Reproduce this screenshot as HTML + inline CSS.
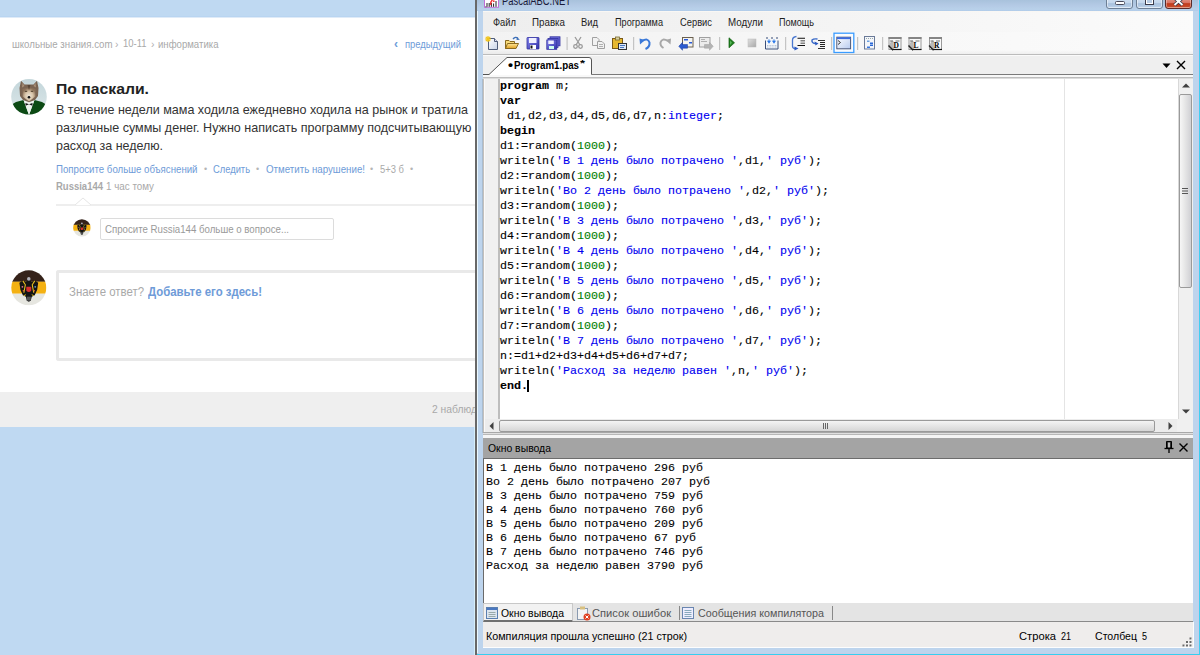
<!DOCTYPE html>
<html><head><meta charset="utf-8">
<style>
*{margin:0;padding:0;box-sizing:border-box}
html,body{width:1200px;height:655px;overflow:hidden;background:#bfd9f2;font-family:"Liberation Sans",sans-serif;position:relative}
.a{position:absolute}
.t{position:absolute;white-space:pre;line-height:1}
svg{position:absolute;overflow:visible}
</style></head><body>
<div class="a" style="left:0px;top:16px;width:475px;height:1px;background:#b9d5f1;"></div>
<div class="a" style="left:0px;top:17px;width:475px;height:1px;background:#dfebf8;"></div>
<div class="a" style="left:0px;top:18px;width:475px;height:374px;background:#fff;"></div>
<div class="a" style="left:0px;top:392px;width:475px;height:35px;background:#efefef;"></div>
<div class="t" style="left:11.5px;top:38.69px;font-size:11px;color:#a9a9a9;font-weight:normal;font-family:'Liberation Sans',sans-serif;transform:scaleX(0.8801);transform-origin:0 0;">школьные знания.com</div>
<div class="t" style="left:115px;top:39.53px;font-size:10px;color:#b0b0b0;font-weight:normal;font-family:'Liberation Sans',sans-serif;transform:scaleX(1.0510);transform-origin:0 0;">›</div>
<div class="t" style="left:123px;top:38.27px;font-size:11.5px;color:#a9a9a9;font-weight:normal;font-family:'Liberation Sans',sans-serif;transform:scaleX(0.8229);transform-origin:0 0;">10-11</div>
<div class="t" style="left:150.5px;top:39.53px;font-size:10px;color:#b0b0b0;font-weight:normal;font-family:'Liberation Sans',sans-serif;transform:scaleX(1.0510);transform-origin:0 0;">›</div>
<div class="t" style="left:158px;top:38.69px;font-size:11px;color:#a9a9a9;font-weight:normal;font-family:'Liberation Sans',sans-serif;transform:scaleX(0.8730);transform-origin:0 0;">информатика</div>
<div class="t" style="left:394px;top:37.84px;font-size:12px;color:#6e9bd8;font-weight:bold;font-family:'Liberation Sans',sans-serif;">‹</div>
<div class="t" style="left:405px;top:38.69px;font-size:11px;color:#6e9bd8;font-weight:normal;font-family:'Liberation Sans',sans-serif;transform:scaleX(0.8545);transform-origin:0 0;">предыдущий</div>
<svg style="left:11.3px;top:79.2px" width="36" height="36" viewBox="0 0 36 36">
<defs><clipPath id="cw"><circle cx="18" cy="17.8" r="17.8"/></clipPath>
<linearGradient id="wbg" x1="0" y1="0" x2="0" y2="1"><stop offset="0" stop-color="#c3d6da"/><stop offset="1" stop-color="#dde8ea"/></linearGradient>
<radialGradient id="wface" cx="0.5" cy="0.6" r="0.55"><stop offset="0" stop-color="#ece4d6"/><stop offset="0.55" stop-color="#d8c4a8"/><stop offset="1" stop-color="#8a7058"/></radialGradient></defs>
<g clip-path="url(#cw)">
<rect width="36" height="36" fill="url(#wbg)"/>
<path d="M0 36 V26 L5 23 L12.5 21 L18 36 L23.5 21 L31 23 L36 26 V36Z" fill="#0c4a14"/>
<path d="M12.5 21 L18 22.5 L23.5 21 L18 36Z" fill="#eef3ee"/>
<path d="M14.5 24 L18 25.3 L21.5 24 V26.8 L18 25.3 L14.5 26.8Z" fill="#151515"/>
<path d="M10 1.8 L13.5 5.5 L22.5 5.5 L26 1.8 L27.5 9 L27 17 L24 21 L18 23.2 L12 21 L9 17 L8.5 9Z" fill="#7a6452"/>
<path d="M11.5 10 L18 8.5 L24.5 10 L24.5 17.5 L18 22.5 L11.5 17.5Z" fill="url(#wface)"/>
<path d="M11.5 3.8 L13.5 7 L11 8.5Z M24.5 3.8 L22.5 7 L25 8.5Z" fill="#a89078"/>
<path d="M16.5 6 L18 11 L19.5 6Z" fill="#5a4838"/>
<circle cx="18" cy="18.2" r="1.3" fill="#111"/>
<path d="M13.8 12.3 H16.2 M19.8 12.3 H22.2" stroke="#3a2a1a" stroke-width="0.9"/>
</g></svg>
<div class="t" style="left:56px;top:81.35px;font-size:15.3px;color:#222;font-weight:bold;font-family:'Liberation Sans',sans-serif;transform:scaleX(1.0290);transform-origin:0 0;">По паскали.</div>
<div class="t" style="left:56px;top:102.50px;font-size:13px;color:#333;font-weight:normal;font-family:'Liberation Sans',sans-serif;transform:scaleX(0.9644);transform-origin:0 0;">В течение недели мама ходила ежедневно ходила на рынок и тратила</div>
<div class="t" style="left:56px;top:120.50px;font-size:13px;color:#333;font-weight:normal;font-family:'Liberation Sans',sans-serif;transform:scaleX(0.9650);transform-origin:0 0;">различные суммы денег. Нужно написать программу подсчитывающую</div>
<div class="t" style="left:56px;top:139.00px;font-size:13px;color:#333;font-weight:normal;font-family:'Liberation Sans',sans-serif;transform:scaleX(0.9578);transform-origin:0 0;">расход за неделю.</div>
<div class="t" style="left:56px;top:163.69px;font-size:11px;color:#6e9bd8;font-weight:normal;font-family:'Liberation Sans',sans-serif;transform:scaleX(0.8777);transform-origin:0 0;">Попросите больше объяснений</div>
<div class="t" style="left:204px;top:165.38px;font-size:9px;color:#b5b5b5;font-weight:normal;font-family:'Liberation Sans',sans-serif;">•</div>
<div class="t" style="left:213px;top:163.69px;font-size:11px;color:#6e9bd8;font-weight:normal;font-family:'Liberation Sans',sans-serif;transform:scaleX(0.8492);transform-origin:0 0;">Следить</div>
<div class="t" style="left:256px;top:165.38px;font-size:9px;color:#b5b5b5;font-weight:normal;font-family:'Liberation Sans',sans-serif;">•</div>
<div class="t" style="left:266px;top:163.69px;font-size:11px;color:#6e9bd8;font-weight:normal;font-family:'Liberation Sans',sans-serif;transform:scaleX(0.8844);transform-origin:0 0;">Отметить нарушение!</div>
<div class="t" style="left:370px;top:165.38px;font-size:9px;color:#b5b5b5;font-weight:normal;font-family:'Liberation Sans',sans-serif;">•</div>
<div class="t" style="left:380px;top:163.69px;font-size:11px;color:#aaa;font-weight:normal;font-family:'Liberation Sans',sans-serif;transform:scaleX(0.8567);transform-origin:0 0;">5+3 б</div>
<div class="t" style="left:410px;top:165.38px;font-size:9px;color:#b5b5b5;font-weight:normal;font-family:'Liberation Sans',sans-serif;">•</div>
<div class="t" style="left:56px;top:181.19px;font-size:11px;color:#a9a9a9;font-weight:bold;font-family:'Liberation Sans',sans-serif;transform:scaleX(0.8636);transform-origin:0 0;">Russia144</div>
<div class="t" style="left:106px;top:181.19px;font-size:11px;color:#a9a9a9;font-weight:normal;font-family:'Liberation Sans',sans-serif;transform:scaleX(0.8922);transform-origin:0 0;">1 час тому</div>
<div class="a" style="left:56px;top:204px;width:419px;height:2px;background:#eeeeee;"></div>
<svg style="left:75px;top:197px" width="16" height="9"><path d="M0 8 L8 1 L16 8" fill="#fff" stroke="#e6e6e6" stroke-width="1"/></svg>
<svg style="left:73.3px;top:219.2px" width="17.8" height="17.8" viewBox="0 0 36 36">
<defs><clipPath id="cf1"><circle cx="18" cy="18" r="17.7"/></clipPath></defs>
<g clip-path="url(#cf1)"><rect width="36" height="12" fill="#35221a"/><rect y="11.8" width="36" height="12.2" fill="#f4b112"/><rect y="24" width="36" height="12" fill="#e6e6e0"/>
<path d="M18 9.5 L21 12 L24 10.5 L27.5 13 L26.5 20 L24 25.5 L21 27 L20 31 L18 32 L16 31 L15 27 L12 25.5 L9.5 20 L8.5 13 L12 10.5 L15 12Z" fill="#141414"/>
<path d="M12 11 L14.5 15 L13 23 M24 11 L21.5 15 L23 23" stroke="#e8c020" stroke-width="1.1" fill="none"/>
<circle cx="18" cy="9" r="1.8" fill="#b0b0b8"/>
<path d="M15.5 17 H20.5 V21 Q18 23.5 15.5 21Z" fill="#d83030"/>
<circle cx="11.5" cy="17" r="0.9" fill="#e07090"/><circle cx="24.5" cy="17" r="0.9" fill="#60a0d0"/>
<circle cx="12.5" cy="21" r="0.8" fill="#e06040"/><circle cx="23.5" cy="21" r="0.8" fill="#e06040"/>
<path d="M13 26 L15 25 M23 26 L21 25" stroke="#e8c020" stroke-width="1"/>
<rect x="16" y="27" width="4" height="4" fill="#555"/>
</g></svg>
<div class="a" style="left:100px;top:218px;width:234px;height:22px;background:#fff;border:1px solid #dcdcdc;border-radius:2px"></div>
<div class="t" style="left:105px;top:223.69px;font-size:11px;color:#9a9a9a;font-weight:normal;font-family:'Liberation Sans',sans-serif;transform:scaleX(0.8795);transform-origin:0 0;">Спросите Russia144 больше о вопросе...</div>
<svg style="left:11.3px;top:269.6px" width="35.6" height="35.6" viewBox="0 0 36 36">
<defs><clipPath id="cf2"><circle cx="18" cy="18" r="17.7"/></clipPath></defs>
<g clip-path="url(#cf2)"><rect width="36" height="12" fill="#35221a"/><rect y="11.8" width="36" height="12.2" fill="#f4b112"/><rect y="24" width="36" height="12" fill="#e6e6e0"/>
<path d="M18 9.5 L21 12 L24 10.5 L27.5 13 L26.5 20 L24 25.5 L21 27 L20 31 L18 32 L16 31 L15 27 L12 25.5 L9.5 20 L8.5 13 L12 10.5 L15 12Z" fill="#141414"/>
<path d="M12 11 L14.5 15 L13 23 M24 11 L21.5 15 L23 23" stroke="#e8c020" stroke-width="1.1" fill="none"/>
<circle cx="18" cy="9" r="1.8" fill="#b0b0b8"/>
<path d="M15.5 17 H20.5 V21 Q18 23.5 15.5 21Z" fill="#d83030"/>
<circle cx="11.5" cy="17" r="0.9" fill="#e07090"/><circle cx="24.5" cy="17" r="0.9" fill="#60a0d0"/>
<circle cx="12.5" cy="21" r="0.8" fill="#e06040"/><circle cx="23.5" cy="21" r="0.8" fill="#e06040"/>
<path d="M13 26 L15 25 M23 26 L21 25" stroke="#e8c020" stroke-width="1"/>
<rect x="16" y="27" width="4" height="4" fill="#555"/>
</g></svg>
<div class="a" style="left:56px;top:270px;width:419px;height:91px;background:#fff;border:3px solid #e9e9e9;border-right:none;border-radius:3px 0 0 3px"></div>
<div class="t" style="left:69px;top:284.50px;font-size:13px;color:#a9a9a9;font-weight:normal;font-family:'Liberation Sans',sans-serif;transform:scaleX(0.8787);transform-origin:0 0;">Знаете ответ?</div>
<div class="t" style="left:148px;top:284.50px;font-size:13px;color:#6e9bd8;font-weight:bold;font-family:'Liberation Sans',sans-serif;transform:scaleX(0.8768);transform-origin:0 0;">Добавьте его здесь!</div>
<div class="t" style="left:432px;top:404.19px;font-size:11px;color:#a9a9a9;font-weight:normal;font-family:'Liberation Sans',sans-serif;transform:scaleX(0.9372);transform-origin:0 0;">2 наблюд</div>
<div class="a" style="left:475px;top:0px;width:2px;height:655px;background:#686868;"></div>
<div class="a" style="left:477px;top:0px;width:723px;height:655px;background:#bdd4ed;"></div>
<div class="a" style="left:1198px;top:0px;width:1px;height:655px;background:#c6cde8;"></div>
<div class="a" style="left:1199px;top:0px;width:1px;height:655px;background:#3fcff2;"></div>
<div class="a" style="left:477px;top:11px;width:1px;height:642px;background:#eaf8ff;"></div>
<div class="a" style="left:482px;top:79px;width:1px;height:354px;background:#a9bccf;"></div>
<div class="a" style="left:474px;top:427px;width:1px;height:228px;background:#d6effb;"></div>
<div class="a" style="left:477px;top:0px;width:721px;height:11px;background:linear-gradient(#a8c2dc,#b3c9e4 45%,#b9d1ea 85%,#afcbe9);"></div>
<div class="a" style="left:477px;top:653px;width:722px;height:1px;background:#c6cde8;"></div>
<div class="a" style="left:477px;top:654px;width:723px;height:1px;background:#35cff0;"></div>
<div class="t" style="left:502px;top:-5.16px;font-size:12px;color:#1a1a3a;font-weight:normal;font-family:'Liberation Sans',sans-serif;transform:scaleX(0.7839);transform-origin:0 0;">PascalABC.NET</div>
<svg style="left:484px;top:0" width="15" height="8"><rect x="0.5" y="-6" width="14" height="13.3" fill="#fff" stroke="#c070d8" stroke-width="1"/><path d="M1.5 6.8 h0.8 M3 3 v3.8 M5.2 3 v3.8 M7.4 3 v3.8 M9.6 3.5 v3.3 M12 1 v5.8" stroke="#222" stroke-width="1"/><path d="M8.5 0 Q6 2 7 5" stroke="#ee2020" stroke-width="1.3" fill="none"/><circle cx="9.8" cy="1.2" r="0.9" fill="#ee3030"/></svg>
<div class="a" style="left:1106px;top:-4px;width:27px;height:13px;background:linear-gradient(#d4e3f3,#c3d6ec 55%,#a9c1dd 60%,#b7cde6 90%,#cadcf0);border:1px solid #6d7f95;border-radius:3px;box-shadow:inset 0 0 0 1px rgba(255,255,255,0.5)"></div>
<div class="a" style="left:1115px;top:1px;width:10px;height:4px;background:#fff;border:1px solid #4a4a5a;border-radius:1.5px"></div>
<div class="a" style="left:1136px;top:-4px;width:27px;height:13px;background:linear-gradient(#d4e3f3,#c3d6ec 55%,#a9c1dd 60%,#b7cde6 90%,#cadcf0);border:1px solid #6d7f95;border-radius:3px;box-shadow:inset 0 0 0 1px rgba(255,255,255,0.5)"></div>
<div class="a" style="left:1144.5px;top:-3px;width:9.5px;height:8px;background:#b8cce4;border:1.5px solid #3a3a4a;box-shadow:inset 0 0 0 1px #fff"></div>
<div class="a" style="left:1165px;top:-4px;width:27px;height:13px;background:linear-gradient(#e8a090,#d87060 55%,#c03a1c 60%,#c84a2a 90%,#e08060);border:1px solid #5a2a2a;border-radius:3px;box-shadow:inset 0 0 0 1px rgba(255,255,255,0.35)"></div>
<svg style="left:1173px;top:-2px" width="11" height="8"><path d="M1.5 0 L9.5 7 M9.5 0 L1.5 7" stroke="#3a3a4a" stroke-width="3.4"/><path d="M1.5 0 L9.5 7 M9.5 0 L1.5 7" stroke="#fff" stroke-width="1.8"/></svg>
<div class="a" style="left:483px;top:11px;width:710px;height:637px;background:#f0f0f0;"></div>
<div class="a" style="left:483px;top:11px;width:710px;height:21px;background:linear-gradient(90deg,#eeeeee,#f4f4f4 50%,#fbfbfb);"></div>
<div class="a" style="left:483px;top:11px;width:710px;height:1px;background:#f9f7f4;"></div>
<div class="t" style="left:493px;top:16.61px;font-size:10.5px;color:#1e1e1e;font-weight:normal;font-family:'Liberation Sans',sans-serif;transform:scaleX(0.8910);transform-origin:0 0;">Файл</div>
<div class="t" style="left:532px;top:16.61px;font-size:10.5px;color:#1e1e1e;font-weight:normal;font-family:'Liberation Sans',sans-serif;transform:scaleX(0.9304);transform-origin:0 0;">Правка</div>
<div class="t" style="left:581px;top:16.61px;font-size:10.5px;color:#1e1e1e;font-weight:normal;font-family:'Liberation Sans',sans-serif;transform:scaleX(0.8950);transform-origin:0 0;">Вид</div>
<div class="t" style="left:615px;top:16.61px;font-size:10.5px;color:#1e1e1e;font-weight:normal;font-family:'Liberation Sans',sans-serif;transform:scaleX(0.8725);transform-origin:0 0;">Программа</div>
<div class="t" style="left:680px;top:16.61px;font-size:10.5px;color:#1e1e1e;font-weight:normal;font-family:'Liberation Sans',sans-serif;transform:scaleX(0.8900);transform-origin:0 0;">Сервис</div>
<div class="t" style="left:728px;top:16.61px;font-size:10.5px;color:#1e1e1e;font-weight:normal;font-family:'Liberation Sans',sans-serif;transform:scaleX(0.9306);transform-origin:0 0;">Модули</div>
<div class="t" style="left:779px;top:16.61px;font-size:10.5px;color:#1e1e1e;font-weight:normal;font-family:'Liberation Sans',sans-serif;transform:scaleX(0.8630);transform-origin:0 0;">Помощь</div>
<div class="a" style="left:483px;top:32px;width:710px;height:22px;background:linear-gradient(90deg,#f3f3f3,#f7f7f7 50%,#fbfbfb);"></div>
<div class="a" style="left:483px;top:50px;width:710px;height:4px;background:linear-gradient(rgba(0,0,0,0),rgba(0,0,0,0.04));"></div>
<div class="a" style="left:483px;top:54px;width:710px;height:1px;background:#bcbcbc;"></div>
<div class="a" style="left:483px;top:55px;width:710px;height:1px;background:#fafafa;"></div>
<div class="a" style="left:483px;top:56px;width:710px;height:19px;background:#efefef;"></div>
<div class="a" style="left:483px;top:74px;width:710px;height:1px;background:#7a7a7a;"></div>
<svg style="left:483px;top:56px" width="110" height="22"><path d="M0 18.5 L6 18.5 L24 1.5 L106 1.5 Q108.5 1.5 108.5 4 L108.5 18.5 L108.5 22 L0 22Z" fill="#fff" stroke="none"/><path d="M0 18.5 L6 18.5 L24 1.5 L106 1.5 Q108.5 1.5 108.5 4 L108.5 18.5" fill="none" stroke="#555" stroke-width="1"/></svg>
<div class="t" style="left:507.5px;top:57.50px;font-size:13px;color:#000;font-weight:bold;font-family:'Liberation Sans',sans-serif;transform:scaleX(1.0986);transform-origin:0 0;">•</div>
<div class="t" style="left:513.5px;top:59.61px;font-size:10.5px;color:#000;font-weight:bold;font-family:'Liberation Sans',sans-serif;transform:scaleX(0.9282);transform-origin:0 0;">Program1.pas</div>
<div class="t" style="left:579.5px;top:59.38px;font-size:9px;color:#000;font-weight:bold;font-family:'Liberation Sans',sans-serif;transform:scaleX(1.4276);transform-origin:0 0;">*</div>
<svg style="left:1162px;top:63px" width="10" height="6"><path d="M0.5 0.5 L8.5 0.5 L4.5 5Z" fill="#000"/></svg>
<svg style="left:1176px;top:60px" width="10" height="10"><path d="M1 1 L9 9 M9 1 L1 9" stroke="#000" stroke-width="1.4"/></svg>
<div class="a" style="left:483px;top:75px;width:710px;height:2px;background:#f8f8f8;"></div>
<div class="a" style="left:483px;top:77px;width:710px;height:1px;background:#bdbdbd;"></div>
<div class="a" style="left:483px;top:78px;width:710px;height:1px;background:#dcdcdc;"></div>
<div class="a" style="left:483px;top:79px;width:696px;height:340px;background:#fff;"></div>
<div class="a" style="left:483px;top:79px;width:15px;height:340px;background:#f0f0f0;"></div>
<div class="a" style="left:498px;top:79px;width:2px;height:340px;background:#bdbdbd;"></div>
<div class="a" style="left:1064px;top:79px;width:1px;height:340px;background:#e4e4e4;"></div>
<div class="a" style="left:1179px;top:79px;width:14px;height:340px;background:#f0f0f0;"></div>
<svg style="left:1182px;top:83px" width="8" height="5"><path d="M0 4.5 L4 0.5 L8 4.5Z" fill="#404040"/></svg>
<div class="a" style="left:1178px;top:79px;width:1px;height:340px;background:#d8d8d8;"></div>
<div class="a" style="left:1179px;top:94px;width:13px;height:194px;background:linear-gradient(90deg,#f6f6f6,#e8e8e8 40%,#d0d0d4);border:1px solid #9a9a9a;border-radius:2px"></div>
<svg style="left:1182px;top:187px" width="7" height="8"><path d="M0 1.5 H6 M0 4 H6 M0 6.5 H6" stroke="#555" stroke-width="1"/></svg>
<svg style="left:1182px;top:409px" width="8" height="5"><path d="M0 0.5 L4 4.5 L8 0.5Z" fill="#404040"/></svg>
<div class="a" style="left:483px;top:419px;width:710px;height:14px;background:#ececec;"></div>
<svg style="left:489px;top:422px" width="5" height="8"><path d="M4.5 0 L0.5 4 L4.5 8Z" fill="#404040"/></svg>
<div class="a" style="left:499px;top:420px;width:656px;height:12px;background:linear-gradient(#f4f4f4,#d6d6d6);border:1px solid #9a9a9a;border-radius:2px"></div>
<svg style="left:823px;top:423px" width="6" height="6"><path d="M0.5 0 V6 M2.5 0 V6 M4.5 0 V6" stroke="#666" stroke-width="1"/></svg>
<svg style="left:1168px;top:422px" width="5" height="8"><path d="M0.5 0 L4.5 4 L0.5 8Z" fill="#404040"/></svg>
<div class="a" style="left:1177px;top:419px;width:16px;height:14px;background:#f0f0f0;"></div>
<div class="a" style="left:483px;top:79px;width:1px;height:354px;background:#c4c0bc;"></div>
<div class="a" style="left:484px;top:79px;width:1px;height:354px;background:#fafafa;"></div>
<div class="a" style="left:483px;top:432px;width:710px;height:1px;background:#a8a8a8;"></div>
<div class="a" style="left:483px;top:433px;width:710px;height:1px;background:#e0e0e0;"></div>
<div class="a" style="left:483px;top:434px;width:710px;height:1px;background:#b8b8b8;"></div>
<div class="a" style="left:483px;top:435px;width:710px;height:3px;background:#f5f5f5;"></div>
<div class="t" style="left:499.5px;top:80.87px;font-size:11px;color:#000;font-weight:bold;font-family:'Liberation Mono',monospace;transform:scaleX(1.0604);transform-origin:0 0;-webkit-text-stroke:0.1px #000">program</div>
<div class="t" style="left:548.5px;top:80.87px;font-size:11px;color:#000;font-weight:normal;font-family:'Liberation Mono',monospace;transform:scaleX(1.0604);transform-origin:0 0;-webkit-text-stroke:0.1px #000"> m;</div>
<div class="t" style="left:499.5px;top:95.87px;font-size:11px;color:#000;font-weight:bold;font-family:'Liberation Mono',monospace;transform:scaleX(1.0604);transform-origin:0 0;-webkit-text-stroke:0.1px #000">var</div>
<div class="t" style="left:499.5px;top:110.87px;font-size:11px;color:#000;font-weight:normal;font-family:'Liberation Mono',monospace;transform:scaleX(1.0604);transform-origin:0 0;-webkit-text-stroke:0.1px #000"> d1,d2,d3,d4,d5,d6,d7,n:</div>
<div class="t" style="left:667.5px;top:110.87px;font-size:11px;color:#0000f0;font-weight:normal;font-family:'Liberation Mono',monospace;transform:scaleX(1.0604);transform-origin:0 0;-webkit-text-stroke:0.1px #0000f0">integer</div>
<div class="t" style="left:716.5px;top:110.87px;font-size:11px;color:#000;font-weight:normal;font-family:'Liberation Mono',monospace;transform:scaleX(1.0604);transform-origin:0 0;-webkit-text-stroke:0.1px #000">;</div>
<div class="t" style="left:499.5px;top:125.87px;font-size:11px;color:#000;font-weight:bold;font-family:'Liberation Mono',monospace;transform:scaleX(1.0604);transform-origin:0 0;-webkit-text-stroke:0.1px #000">begin</div>
<div class="t" style="left:499.5px;top:140.87px;font-size:11px;color:#000;font-weight:normal;font-family:'Liberation Mono',monospace;transform:scaleX(1.0604);transform-origin:0 0;-webkit-text-stroke:0.1px #000">d1:=random(</div>
<div class="t" style="left:576.5px;top:140.87px;font-size:11px;color:#008000;font-weight:normal;font-family:'Liberation Mono',monospace;transform:scaleX(1.0604);transform-origin:0 0;-webkit-text-stroke:0.1px #008000">1000</div>
<div class="t" style="left:604.5px;top:140.87px;font-size:11px;color:#000;font-weight:normal;font-family:'Liberation Mono',monospace;transform:scaleX(1.0604);transform-origin:0 0;-webkit-text-stroke:0.1px #000">);</div>
<div class="t" style="left:499.5px;top:155.87px;font-size:11px;color:#000;font-weight:normal;font-family:'Liberation Mono',monospace;transform:scaleX(1.0604);transform-origin:0 0;-webkit-text-stroke:0.1px #000">writeln(</div>
<div class="t" style="left:555.5px;top:155.87px;font-size:11px;color:#0000f0;font-weight:normal;font-family:'Liberation Mono',monospace;transform:scaleX(1.0604);transform-origin:0 0;-webkit-text-stroke:0.1px #0000f0">&#x27;В 1 день было потрачено &#x27;</div>
<div class="t" style="left:737.5px;top:155.87px;font-size:11px;color:#000;font-weight:normal;font-family:'Liberation Mono',monospace;transform:scaleX(1.0604);transform-origin:0 0;-webkit-text-stroke:0.1px #000">,d1,</div>
<div class="t" style="left:765.5px;top:155.87px;font-size:11px;color:#0000f0;font-weight:normal;font-family:'Liberation Mono',monospace;transform:scaleX(1.0604);transform-origin:0 0;-webkit-text-stroke:0.1px #0000f0">&#x27; руб&#x27;</div>
<div class="t" style="left:807.5px;top:155.87px;font-size:11px;color:#000;font-weight:normal;font-family:'Liberation Mono',monospace;transform:scaleX(1.0604);transform-origin:0 0;-webkit-text-stroke:0.1px #000">);</div>
<div class="t" style="left:499.5px;top:170.87px;font-size:11px;color:#000;font-weight:normal;font-family:'Liberation Mono',monospace;transform:scaleX(1.0604);transform-origin:0 0;-webkit-text-stroke:0.1px #000">d2:=random(</div>
<div class="t" style="left:576.5px;top:170.87px;font-size:11px;color:#008000;font-weight:normal;font-family:'Liberation Mono',monospace;transform:scaleX(1.0604);transform-origin:0 0;-webkit-text-stroke:0.1px #008000">1000</div>
<div class="t" style="left:604.5px;top:170.87px;font-size:11px;color:#000;font-weight:normal;font-family:'Liberation Mono',monospace;transform:scaleX(1.0604);transform-origin:0 0;-webkit-text-stroke:0.1px #000">);</div>
<div class="t" style="left:499.5px;top:185.87px;font-size:11px;color:#000;font-weight:normal;font-family:'Liberation Mono',monospace;transform:scaleX(1.0604);transform-origin:0 0;-webkit-text-stroke:0.1px #000">writeln(</div>
<div class="t" style="left:555.5px;top:185.87px;font-size:11px;color:#0000f0;font-weight:normal;font-family:'Liberation Mono',monospace;transform:scaleX(1.0604);transform-origin:0 0;-webkit-text-stroke:0.1px #0000f0">&#x27;Во 2 день было потрачено &#x27;</div>
<div class="t" style="left:744.5px;top:185.87px;font-size:11px;color:#000;font-weight:normal;font-family:'Liberation Mono',monospace;transform:scaleX(1.0604);transform-origin:0 0;-webkit-text-stroke:0.1px #000">,d2,</div>
<div class="t" style="left:772.5px;top:185.87px;font-size:11px;color:#0000f0;font-weight:normal;font-family:'Liberation Mono',monospace;transform:scaleX(1.0604);transform-origin:0 0;-webkit-text-stroke:0.1px #0000f0">&#x27; руб&#x27;</div>
<div class="t" style="left:814.5px;top:185.87px;font-size:11px;color:#000;font-weight:normal;font-family:'Liberation Mono',monospace;transform:scaleX(1.0604);transform-origin:0 0;-webkit-text-stroke:0.1px #000">);</div>
<div class="t" style="left:499.5px;top:200.87px;font-size:11px;color:#000;font-weight:normal;font-family:'Liberation Mono',monospace;transform:scaleX(1.0604);transform-origin:0 0;-webkit-text-stroke:0.1px #000">d3:=random(</div>
<div class="t" style="left:576.5px;top:200.87px;font-size:11px;color:#008000;font-weight:normal;font-family:'Liberation Mono',monospace;transform:scaleX(1.0604);transform-origin:0 0;-webkit-text-stroke:0.1px #008000">1000</div>
<div class="t" style="left:604.5px;top:200.87px;font-size:11px;color:#000;font-weight:normal;font-family:'Liberation Mono',monospace;transform:scaleX(1.0604);transform-origin:0 0;-webkit-text-stroke:0.1px #000">);</div>
<div class="t" style="left:499.5px;top:215.87px;font-size:11px;color:#000;font-weight:normal;font-family:'Liberation Mono',monospace;transform:scaleX(1.0604);transform-origin:0 0;-webkit-text-stroke:0.1px #000">writeln(</div>
<div class="t" style="left:555.5px;top:215.87px;font-size:11px;color:#0000f0;font-weight:normal;font-family:'Liberation Mono',monospace;transform:scaleX(1.0604);transform-origin:0 0;-webkit-text-stroke:0.1px #0000f0">&#x27;В 3 день было потрачено &#x27;</div>
<div class="t" style="left:737.5px;top:215.87px;font-size:11px;color:#000;font-weight:normal;font-family:'Liberation Mono',monospace;transform:scaleX(1.0604);transform-origin:0 0;-webkit-text-stroke:0.1px #000">,d3,</div>
<div class="t" style="left:765.5px;top:215.87px;font-size:11px;color:#0000f0;font-weight:normal;font-family:'Liberation Mono',monospace;transform:scaleX(1.0604);transform-origin:0 0;-webkit-text-stroke:0.1px #0000f0">&#x27; руб&#x27;</div>
<div class="t" style="left:807.5px;top:215.87px;font-size:11px;color:#000;font-weight:normal;font-family:'Liberation Mono',monospace;transform:scaleX(1.0604);transform-origin:0 0;-webkit-text-stroke:0.1px #000">);</div>
<div class="t" style="left:499.5px;top:230.87px;font-size:11px;color:#000;font-weight:normal;font-family:'Liberation Mono',monospace;transform:scaleX(1.0604);transform-origin:0 0;-webkit-text-stroke:0.1px #000">d4:=random(</div>
<div class="t" style="left:576.5px;top:230.87px;font-size:11px;color:#008000;font-weight:normal;font-family:'Liberation Mono',monospace;transform:scaleX(1.0604);transform-origin:0 0;-webkit-text-stroke:0.1px #008000">1000</div>
<div class="t" style="left:604.5px;top:230.87px;font-size:11px;color:#000;font-weight:normal;font-family:'Liberation Mono',monospace;transform:scaleX(1.0604);transform-origin:0 0;-webkit-text-stroke:0.1px #000">);</div>
<div class="t" style="left:499.5px;top:245.87px;font-size:11px;color:#000;font-weight:normal;font-family:'Liberation Mono',monospace;transform:scaleX(1.0604);transform-origin:0 0;-webkit-text-stroke:0.1px #000">writeln(</div>
<div class="t" style="left:555.5px;top:245.87px;font-size:11px;color:#0000f0;font-weight:normal;font-family:'Liberation Mono',monospace;transform:scaleX(1.0604);transform-origin:0 0;-webkit-text-stroke:0.1px #0000f0">&#x27;В 4 день было потрачено &#x27;</div>
<div class="t" style="left:737.5px;top:245.87px;font-size:11px;color:#000;font-weight:normal;font-family:'Liberation Mono',monospace;transform:scaleX(1.0604);transform-origin:0 0;-webkit-text-stroke:0.1px #000">,d4,</div>
<div class="t" style="left:765.5px;top:245.87px;font-size:11px;color:#0000f0;font-weight:normal;font-family:'Liberation Mono',monospace;transform:scaleX(1.0604);transform-origin:0 0;-webkit-text-stroke:0.1px #0000f0">&#x27; руб&#x27;</div>
<div class="t" style="left:807.5px;top:245.87px;font-size:11px;color:#000;font-weight:normal;font-family:'Liberation Mono',monospace;transform:scaleX(1.0604);transform-origin:0 0;-webkit-text-stroke:0.1px #000">);</div>
<div class="t" style="left:499.5px;top:260.87px;font-size:11px;color:#000;font-weight:normal;font-family:'Liberation Mono',monospace;transform:scaleX(1.0604);transform-origin:0 0;-webkit-text-stroke:0.1px #000">d5:=random(</div>
<div class="t" style="left:576.5px;top:260.87px;font-size:11px;color:#008000;font-weight:normal;font-family:'Liberation Mono',monospace;transform:scaleX(1.0604);transform-origin:0 0;-webkit-text-stroke:0.1px #008000">1000</div>
<div class="t" style="left:604.5px;top:260.87px;font-size:11px;color:#000;font-weight:normal;font-family:'Liberation Mono',monospace;transform:scaleX(1.0604);transform-origin:0 0;-webkit-text-stroke:0.1px #000">);</div>
<div class="t" style="left:499.5px;top:275.87px;font-size:11px;color:#000;font-weight:normal;font-family:'Liberation Mono',monospace;transform:scaleX(1.0604);transform-origin:0 0;-webkit-text-stroke:0.1px #000">writeln(</div>
<div class="t" style="left:555.5px;top:275.87px;font-size:11px;color:#0000f0;font-weight:normal;font-family:'Liberation Mono',monospace;transform:scaleX(1.0604);transform-origin:0 0;-webkit-text-stroke:0.1px #0000f0">&#x27;В 5 день было потрачено &#x27;</div>
<div class="t" style="left:737.5px;top:275.87px;font-size:11px;color:#000;font-weight:normal;font-family:'Liberation Mono',monospace;transform:scaleX(1.0604);transform-origin:0 0;-webkit-text-stroke:0.1px #000">,d5,</div>
<div class="t" style="left:765.5px;top:275.87px;font-size:11px;color:#0000f0;font-weight:normal;font-family:'Liberation Mono',monospace;transform:scaleX(1.0604);transform-origin:0 0;-webkit-text-stroke:0.1px #0000f0">&#x27; руб&#x27;</div>
<div class="t" style="left:807.5px;top:275.87px;font-size:11px;color:#000;font-weight:normal;font-family:'Liberation Mono',monospace;transform:scaleX(1.0604);transform-origin:0 0;-webkit-text-stroke:0.1px #000">);</div>
<div class="t" style="left:499.5px;top:290.87px;font-size:11px;color:#000;font-weight:normal;font-family:'Liberation Mono',monospace;transform:scaleX(1.0604);transform-origin:0 0;-webkit-text-stroke:0.1px #000">d6:=random(</div>
<div class="t" style="left:576.5px;top:290.87px;font-size:11px;color:#008000;font-weight:normal;font-family:'Liberation Mono',monospace;transform:scaleX(1.0604);transform-origin:0 0;-webkit-text-stroke:0.1px #008000">1000</div>
<div class="t" style="left:604.5px;top:290.87px;font-size:11px;color:#000;font-weight:normal;font-family:'Liberation Mono',monospace;transform:scaleX(1.0604);transform-origin:0 0;-webkit-text-stroke:0.1px #000">);</div>
<div class="t" style="left:499.5px;top:305.87px;font-size:11px;color:#000;font-weight:normal;font-family:'Liberation Mono',monospace;transform:scaleX(1.0604);transform-origin:0 0;-webkit-text-stroke:0.1px #000">writeln(</div>
<div class="t" style="left:555.5px;top:305.87px;font-size:11px;color:#0000f0;font-weight:normal;font-family:'Liberation Mono',monospace;transform:scaleX(1.0604);transform-origin:0 0;-webkit-text-stroke:0.1px #0000f0">&#x27;В 6 день было потрачено &#x27;</div>
<div class="t" style="left:737.5px;top:305.87px;font-size:11px;color:#000;font-weight:normal;font-family:'Liberation Mono',monospace;transform:scaleX(1.0604);transform-origin:0 0;-webkit-text-stroke:0.1px #000">,d6,</div>
<div class="t" style="left:765.5px;top:305.87px;font-size:11px;color:#0000f0;font-weight:normal;font-family:'Liberation Mono',monospace;transform:scaleX(1.0604);transform-origin:0 0;-webkit-text-stroke:0.1px #0000f0">&#x27; руб&#x27;</div>
<div class="t" style="left:807.5px;top:305.87px;font-size:11px;color:#000;font-weight:normal;font-family:'Liberation Mono',monospace;transform:scaleX(1.0604);transform-origin:0 0;-webkit-text-stroke:0.1px #000">);</div>
<div class="t" style="left:499.5px;top:320.87px;font-size:11px;color:#000;font-weight:normal;font-family:'Liberation Mono',monospace;transform:scaleX(1.0604);transform-origin:0 0;-webkit-text-stroke:0.1px #000">d7:=random(</div>
<div class="t" style="left:576.5px;top:320.87px;font-size:11px;color:#008000;font-weight:normal;font-family:'Liberation Mono',monospace;transform:scaleX(1.0604);transform-origin:0 0;-webkit-text-stroke:0.1px #008000">1000</div>
<div class="t" style="left:604.5px;top:320.87px;font-size:11px;color:#000;font-weight:normal;font-family:'Liberation Mono',monospace;transform:scaleX(1.0604);transform-origin:0 0;-webkit-text-stroke:0.1px #000">);</div>
<div class="t" style="left:499.5px;top:335.87px;font-size:11px;color:#000;font-weight:normal;font-family:'Liberation Mono',monospace;transform:scaleX(1.0604);transform-origin:0 0;-webkit-text-stroke:0.1px #000">writeln(</div>
<div class="t" style="left:555.5px;top:335.87px;font-size:11px;color:#0000f0;font-weight:normal;font-family:'Liberation Mono',monospace;transform:scaleX(1.0604);transform-origin:0 0;-webkit-text-stroke:0.1px #0000f0">&#x27;В 7 день было потрачено &#x27;</div>
<div class="t" style="left:737.5px;top:335.87px;font-size:11px;color:#000;font-weight:normal;font-family:'Liberation Mono',monospace;transform:scaleX(1.0604);transform-origin:0 0;-webkit-text-stroke:0.1px #000">,d7,</div>
<div class="t" style="left:765.5px;top:335.87px;font-size:11px;color:#0000f0;font-weight:normal;font-family:'Liberation Mono',monospace;transform:scaleX(1.0604);transform-origin:0 0;-webkit-text-stroke:0.1px #0000f0">&#x27; руб&#x27;</div>
<div class="t" style="left:807.5px;top:335.87px;font-size:11px;color:#000;font-weight:normal;font-family:'Liberation Mono',monospace;transform:scaleX(1.0604);transform-origin:0 0;-webkit-text-stroke:0.1px #000">);</div>
<div class="t" style="left:499.5px;top:350.87px;font-size:11px;color:#000;font-weight:normal;font-family:'Liberation Mono',monospace;transform:scaleX(1.0604);transform-origin:0 0;-webkit-text-stroke:0.1px #000">n:=d1+d2+d3+d4+d5+d6+d7+d7;</div>
<div class="t" style="left:499.5px;top:365.87px;font-size:11px;color:#000;font-weight:normal;font-family:'Liberation Mono',monospace;transform:scaleX(1.0604);transform-origin:0 0;-webkit-text-stroke:0.1px #000">writeln(</div>
<div class="t" style="left:555.5px;top:365.87px;font-size:11px;color:#0000f0;font-weight:normal;font-family:'Liberation Mono',monospace;transform:scaleX(1.0604);transform-origin:0 0;-webkit-text-stroke:0.1px #0000f0">&#x27;Расход за неделю равен &#x27;</div>
<div class="t" style="left:730.5px;top:365.87px;font-size:11px;color:#000;font-weight:normal;font-family:'Liberation Mono',monospace;transform:scaleX(1.0604);transform-origin:0 0;-webkit-text-stroke:0.1px #000">,n,</div>
<div class="t" style="left:751.5px;top:365.87px;font-size:11px;color:#0000f0;font-weight:normal;font-family:'Liberation Mono',monospace;transform:scaleX(1.0604);transform-origin:0 0;-webkit-text-stroke:0.1px #0000f0">&#x27; руб&#x27;</div>
<div class="t" style="left:793.5px;top:365.87px;font-size:11px;color:#000;font-weight:normal;font-family:'Liberation Mono',monospace;transform:scaleX(1.0604);transform-origin:0 0;-webkit-text-stroke:0.1px #000">);</div>
<div class="t" style="left:499.5px;top:380.87px;font-size:11px;color:#000;font-weight:bold;font-family:'Liberation Mono',monospace;transform:scaleX(1.0604);transform-origin:0 0;-webkit-text-stroke:0.1px #000">end.</div>
<div class="a" style="left:527px;top:380px;width:2px;height:12px;background:#000;"></div>
<div class="a" style="left:483px;top:438px;width:710px;height:20px;background:#a4a4a4;"></div>
<div class="t" style="left:488px;top:442.69px;font-size:11px;color:#000;font-weight:normal;font-family:'Liberation Sans',sans-serif;transform:scaleX(0.9474);transform-origin:0 0;">Окно вывода</div>
<svg style="left:1164px;top:441px" width="10" height="13"><path d="M2.5 0.5 H7.5 V7 H2.5Z" fill="#333" stroke="#000" stroke-width="1"/><rect x="4" y="1.5" width="2" height="5" fill="#bbb"/><path d="M0.5 7.5 H9.5" stroke="#000" stroke-width="1.3"/><path d="M5 8 V12" stroke="#000" stroke-width="1.3"/></svg>
<svg style="left:1179px;top:443px" width="9" height="9"><path d="M0.5 0.5 L8.5 8.5 M8.5 0.5 L0.5 8.5" stroke="#000" stroke-width="1.4"/></svg>
<div class="a" style="left:483px;top:458px;width:710px;height:1px;background:#6c6c6c;"></div>
<div class="a" style="left:483px;top:459px;width:710px;height:144px;background:#fff;"></div>
<div class="a" style="left:483px;top:459px;width:1px;height:144px;background:#6a6a6a;"></div>
<div class="t" style="left:486px;top:462.39px;font-size:11.5px;color:#000;font-weight:normal;font-family:'Liberation Mono',monospace;transform:scaleX(1.0143);transform-origin:0 0;-webkit-text-stroke:0.1px #000">В 1 день было потрачено 296 руб</div>
<div class="t" style="left:486px;top:476.39px;font-size:11.5px;color:#000;font-weight:normal;font-family:'Liberation Mono',monospace;transform:scaleX(1.0143);transform-origin:0 0;-webkit-text-stroke:0.1px #000">Во 2 день было потрачено 207 руб</div>
<div class="t" style="left:486px;top:490.39px;font-size:11.5px;color:#000;font-weight:normal;font-family:'Liberation Mono',monospace;transform:scaleX(1.0143);transform-origin:0 0;-webkit-text-stroke:0.1px #000">В 3 день было потрачено 759 руб</div>
<div class="t" style="left:486px;top:504.39px;font-size:11.5px;color:#000;font-weight:normal;font-family:'Liberation Mono',monospace;transform:scaleX(1.0143);transform-origin:0 0;-webkit-text-stroke:0.1px #000">В 4 день было потрачено 760 руб</div>
<div class="t" style="left:486px;top:518.39px;font-size:11.5px;color:#000;font-weight:normal;font-family:'Liberation Mono',monospace;transform:scaleX(1.0143);transform-origin:0 0;-webkit-text-stroke:0.1px #000">В 5 день было потрачено 209 руб</div>
<div class="t" style="left:486px;top:532.39px;font-size:11.5px;color:#000;font-weight:normal;font-family:'Liberation Mono',monospace;transform:scaleX(1.0143);transform-origin:0 0;-webkit-text-stroke:0.1px #000">В 6 день было потрачено 67 руб</div>
<div class="t" style="left:486px;top:546.39px;font-size:11.5px;color:#000;font-weight:normal;font-family:'Liberation Mono',monospace;transform:scaleX(1.0143);transform-origin:0 0;-webkit-text-stroke:0.1px #000">В 7 день было потрачено 746 руб</div>
<div class="t" style="left:486px;top:560.39px;font-size:11.5px;color:#000;font-weight:normal;font-family:'Liberation Mono',monospace;transform:scaleX(1.0143);transform-origin:0 0;-webkit-text-stroke:0.1px #000">Расход за неделю равен 3790 руб</div>
<div class="a" style="left:483px;top:603px;width:710px;height:19px;background:#e4e4e4;"></div>
<div class="a" style="left:483px;top:621px;width:710px;height:1px;background:#8a8a8a;"></div>
<div class="a" style="left:483px;top:603px;width:90px;height:19px;background:#f2f2f2;border:1px solid #c8c8c8;border-bottom:2px solid #707070"></div>
<svg style="left:486px;top:607px" width="12" height="12"><rect x="0.5" y="0.5" width="11" height="11" fill="#dde6f0" stroke="#5a7fb0"/><rect x="1" y="1" width="10" height="2" fill="#4a78c0"/><path d="M2.5 5.5 H9.5 M2.5 7.5 H9.5 M2.5 9.5 H9.5" stroke="#9aa" stroke-width="1"/></svg>
<div class="t" style="left:501px;top:607.69px;font-size:11px;color:#000;font-weight:normal;font-family:'Liberation Sans',sans-serif;transform:scaleX(0.9474);transform-origin:0 0;">Окно вывода</div>
<svg style="left:577px;top:606px" width="14" height="15"><rect x="0.5" y="2.5" width="10" height="11" fill="#f4f4f4" stroke="#8a9ab0"/><rect x="3" y="0.5" width="5" height="3" fill="#d8c080"/><circle cx="10" cy="11" r="3.5" fill="#e04020"/><path d="M8.5 9.5 L11.5 12.5 M11.5 9.5 L8.5 12.5" stroke="#fff" stroke-width="1"/></svg>
<div class="t" style="left:592px;top:607.69px;font-size:11px;color:#555;font-weight:normal;font-family:'Liberation Sans',sans-serif;transform:scaleX(1.0132);transform-origin:0 0;">Список ошибок</div>
<div class="a" style="left:679px;top:606px;width:1px;height:14px;background:#888;"></div>
<svg style="left:682px;top:607px" width="12" height="12"><rect x="0.5" y="0.5" width="11" height="11" fill="#eef" stroke="#6a86b0"/><path d="M2.5 3.5 H9.5 M2.5 5.5 H9.5 M2.5 7.5 H9.5 M2.5 9.5 H9.5" stroke="#8ab" stroke-width="1"/></svg>
<div class="t" style="left:698px;top:607.69px;font-size:11px;color:#555;font-weight:normal;font-family:'Liberation Sans',sans-serif;transform:scaleX(0.9759);transform-origin:0 0;">Сообщения компилятора</div>
<div class="a" style="left:832px;top:606px;width:1px;height:14px;background:#888;"></div>
<div class="a" style="left:483px;top:622px;width:710px;height:25px;background:#efedec;"></div>
<div class="a" style="left:483px;top:647px;width:711px;height:1px;background:#fdfdfd;"></div>
<div class="a" style="left:1193px;top:622px;width:1px;height:26px;background:#fdfdfd;"></div>
<div class="t" style="left:486px;top:630.69px;font-size:11px;color:#000;font-weight:normal;font-family:'Liberation Sans',sans-serif;transform:scaleX(0.9764);transform-origin:0 0;">Компиляция прошла успешно (21 строк)</div>
<div class="t" style="left:1019px;top:630.69px;font-size:11px;color:#000;font-weight:normal;font-family:'Liberation Sans',sans-serif;transform:scaleX(1.0168);transform-origin:0 0;">Строка</div>
<div class="t" style="left:1061px;top:630.69px;font-size:11px;color:#000;font-weight:normal;font-family:'Liberation Sans',sans-serif;transform:scaleX(0.8173);transform-origin:0 0;">21</div>
<div class="t" style="left:1095px;top:630.69px;font-size:11px;color:#000;font-weight:normal;font-family:'Liberation Sans',sans-serif;transform:scaleX(0.9601);transform-origin:0 0;">Столбец</div>
<div class="t" style="left:1142px;top:630.69px;font-size:11px;color:#000;font-weight:normal;font-family:'Liberation Sans',sans-serif;transform:scaleX(0.8173);transform-origin:0 0;">5</div>
<svg style="left:1180px;top:635px" width="13" height="13"><g fill="#fff"><rect x="10" y="3" width="2" height="2"/><rect x="6.5" y="6.5" width="2" height="2"/><rect x="10" y="6.5" width="2" height="2"/><rect x="3" y="10" width="2" height="2"/><rect x="6.5" y="10" width="2" height="2"/><rect x="10" y="10" width="2" height="2"/></g><g fill="#6a6a6a"><rect x="9.5" y="2.5" width="2" height="2"/><rect x="6" y="6" width="2" height="2"/><rect x="9.5" y="6" width="2" height="2"/><rect x="2.5" y="9.5" width="2" height="2"/><rect x="6" y="9.5" width="2" height="2"/><rect x="9.5" y="9.5" width="2" height="2"/></g></svg>
<svg style="left:0;top:0" width="1200" height="60" viewBox="0 0 1200 60">
<defs>
<linearGradient id="gpage" x1="0" y1="0" x2="1" y2="1"><stop offset="0" stop-color="#ffffff"/><stop offset="1" stop-color="#c8d4e8"/></linearGradient>
<linearGradient id="gfold" x1="0" y1="0" x2="0" y2="1"><stop offset="0" stop-color="#ffe89a"/><stop offset="1" stop-color="#e0a020"/></linearGradient>
<linearGradient id="gblue" x1="0" y1="0" x2="1" y2="1"><stop offset="0" stop-color="#8a8af0"/><stop offset="1" stop-color="#3030a8"/></linearGradient>
<linearGradient id="gcon" x1="0" y1="0" x2="1" y2="1"><stop offset="0" stop-color="#ffffff"/><stop offset="1" stop-color="#b8cbef"/></linearGradient>
<linearGradient id="gstop" x1="0" y1="0" x2="1" y2="1"><stop offset="0" stop-color="#e0e0e0"/><stop offset="1" stop-color="#a8a8a8"/></linearGradient>
</defs>
<!-- new -->
<g>
<path d="M488.5 38.5 H494.5 L497.5 41.5 V49.5 H488.5Z" fill="url(#gpage)" stroke="#4f5d7a"/>
<path d="M494.5 38.5 V41.5 H497.5" fill="#dde" stroke="#4f5d7a"/>
<path d="M488 36 L488 42 M485 39 L491 39 M485.8 36.8 L490.2 41.2 M490.2 36.8 L485.8 41.2" stroke="#f2c51a" stroke-width="1.2"/>
</g>
<!-- open -->
<g>
<path d="M505.5 40.5 H509 L510 41.5 H514.5 V48.5 H505.5Z" fill="#f8dc7a" stroke="#8a6a20"/>
<path d="M505.5 48.5 L507.5 43.5 H518.5 L516 48.5Z" fill="url(#gfold)" stroke="#8a6a20"/>
<path d="M513 39 Q515.5 36 518 38.5" stroke="#3d6fb8" stroke-width="1.3" fill="none"/>
<path d="M517 37 L519.8 39.8 L516.5 40Z" fill="#3d6fb8"/>
</g>
<!-- save -->
<g>
<rect x="527" y="37.5" width="12" height="11.5" rx="0.5" fill="url(#gblue)" stroke="#3030a0" stroke-width="0.8"/>
<rect x="529" y="38" width="7.5" height="5" fill="#f0f0ff"/>
<rect x="530" y="45" width="6" height="4" fill="#fff"/><rect x="530.5" y="45.5" width="2" height="3" fill="#111"/>
</g>
<!-- save all -->
<g>
<rect x="550" y="36.8" width="10" height="9" fill="#6a6ad8" stroke="#3030a0" stroke-width="0.8"/>
<rect x="548" y="38.5" width="10" height="9" fill="#7070dc" stroke="#3030a0" stroke-width="0.8"/>
<rect x="546.8" y="40" width="10" height="9.3" fill="url(#gblue)" stroke="#3030a0" stroke-width="0.8"/>
<rect x="548.3" y="40.5" width="5.5" height="3.5" fill="#f0f0ff"/>
<rect x="549" y="46" width="5" height="3" fill="#cfe"/>
</g>
<rect x="566.5" y="37" width="1.2" height="13" fill="#c4c4c4"/>
<!-- cut -->
<g stroke="#9a9a9a" fill="none" stroke-width="1.3">
<path d="M575 37 L580 45 M581 37 L576 45"/><circle cx="575.5" cy="46.5" r="1.8"/><circle cx="580.5" cy="46.5" r="1.8"/>
</g>
<!-- copy -->
<g>
<path d="M592.5 37.5 H597 L599 39.5 V45.5 H592.5Z" fill="#f2f2f2" stroke="#a0a0a0"/>
<path d="M597.5 41.5 H602 L604.5 44 V48.5 H597.5Z" fill="#f2f2f2" stroke="#a0a0a0"/>
<path d="M599 44.5 H603 M599 46.5 H603" stroke="#b0b0b0"/>
</g>
<!-- paste -->
<g>
<rect x="612.5" y="38.5" width="10" height="10" fill="#e6b830" stroke="#7a5a18"/>
<rect x="615.5" y="37" width="4" height="3" fill="#d8d0a0" stroke="#7a6a30" stroke-width="0.8"/>
<rect x="618.5" y="43.5" width="8" height="6" fill="#dde8f8" stroke="#333" stroke-width="1"/>
<path d="M620 45.5 H625 M620 47.5 H624" stroke="#4a78c0"/>
</g>
<rect x="633" y="37" width="1.2" height="13" fill="#c4c4c4"/>
<!-- undo -->
<path d="M642 41 Q648 37.5 649.5 42.5 Q650 47 645.5 49" stroke="#3a78d8" stroke-width="2" fill="none"/>
<path d="M639.5 38.5 L645 40 L640 44.5Z" fill="#3a78d8"/>
<!-- redo -->
<path d="M668 41 Q662 37.5 660.5 42.5 Q660 46 663.5 48" stroke="#a8a8a8" stroke-width="2" fill="none"/>
<path d="M671 38.5 L665.5 40 L670.5 44.5Z" fill="#a8a8a8"/>
<!-- panel arrow left -->
<g>
<rect x="682.5" y="37.5" width="10.5" height="9.5" fill="#f4f4f0" stroke="#6a6050"/>
<rect x="684" y="39" width="4" height="1.5" fill="#2a5ad8"/><rect x="689" y="42" width="3" height="1.5" fill="#2a5ad8"/>
<path d="M678.8 46.3 L682.5 42.3 V44.5 H687.5 V48.2 H682.5 V50.3Z" fill="#2a5ad0" stroke="#1a3a98" stroke-width="0.5"/>
</g>
<!-- panel arrow right gray -->
<g>
<rect x="699.5" y="37.5" width="10.5" height="9.5" fill="#ececec" stroke="#a0a0a0"/>
<path d="M701 39.5 H705 M701 41.5 H707" stroke="#b0b0b0"/>
<path d="M713.2 46.3 L709.5 42.3 V44.5 H704.5 V48.2 H709.5 V50.3Z" fill="#b4b4b4" stroke="#a0a0a0" stroke-width="0.5"/>
</g>
<rect x="719" y="37" width="1.2" height="13" fill="#c4c4c4"/>
<!-- play -->
<path d="M729 37.8 L734.5 42.8 L729 47.8Z" fill="#1f7f1f" stroke="#0f5f0f" stroke-width="0.7"/><path d="M730 40.5 L732 42.8 L730 45Z" fill="#5ab85a"/>
<!-- stop -->
<rect x="748" y="39" width="8" height="8" fill="url(#gstop)" stroke="#bbb" stroke-width="0.5"/>
<!-- panel w arrows -->
<g>
<rect x="765.5" y="40.5" width="12.5" height="8.5" fill="#f4f7fb"/>
<path d="M765.5 40.5 V49 H778 V40.5" stroke="#3a4e78" stroke-width="1" fill="none"/>
<path d="M766 37 L768 39 M768 37 L766 39 M771 37 L773 39 M773 37 L771 39 M776 37 L778 39 M778 37 L776 39" stroke="#6a7a9a" stroke-width="0.7"/>
<path d="M766.8 40.5 L769 43.8 L771.2 40.5 L769.6 41 V39.5 H768.4 V41Z" fill="#2a78e8"/>
<path d="M771.8 40.5 L774 43.8 L776.2 40.5 L774.6 41 V39.5 H773.4 V41Z" fill="#2a78e8"/>
<path d="M767 45.5 H777 M767 47 H777" stroke="#a8b8d0" stroke-width="0.8" stroke-dasharray="1 0.6"/>
</g>
<rect x="785" y="37" width="1.2" height="13" fill="#c4c4c4"/>
<!-- step into -->
<g>
<path d="M796.5 36.5 Q792.5 37 792.5 40 V46 Q792.5 48.5 795 48.5" stroke="#4a78d0" stroke-width="1.3" fill="none"/>
<path d="M794.5 46.5 L798.5 48.5 L794.5 50.5Z" fill="#2a58c0"/>
<path d="M797.5 38.3 H805 M797.5 45.5 H805" stroke="#111" stroke-width="1.1"/>
<path d="M800.5 40.5 H805 M800.5 42 H805 M800.5 43.5 H805" stroke="#777" stroke-width="0.9"/>
</g>
<!-- step over -->
<g>
<path d="M815 43.5 Q811.5 43 812 40 Q813.5 38.5 817.5 39" stroke="#3a6ac8" stroke-width="1.4" fill="none"/>
<path d="M814.5 41.5 L818.5 43.5 L815.5 45.5Z" fill="#2a58c0"/>
<path d="M818 40.5 H825 M818 48.5 H825" stroke="#333" stroke-width="1.2"/>
<path d="M820 42.5 H825 M820 44.5 H825 M820 46.5 H825" stroke="#222" stroke-width="1"/>
</g>
<rect x="831" y="37" width="1.2" height="13" fill="#c4c4c4"/>
<!-- pressed console -->
<rect x="834" y="33.2" width="19.8" height="19.3" fill="#fafcff" stroke="#3a9cff" stroke-width="1.3"/>
<rect x="836.8" y="37.2" width="13.8" height="11.6" fill="url(#gcon)" stroke="#4a5878"/>
<rect x="837" y="37.3" width="13.5" height="1.8" fill="#3a6ae0"/>
<path d="M838 40.5 L840.5 42.5 L838 44.5" stroke="#222" stroke-width="0.9" fill="none"/>
<rect x="857" y="37" width="1.2" height="13" fill="#c4c4c4"/>
<!-- doc blue -->
<g>
<rect x="864.5" y="36.5" width="10" height="12.5" fill="#f4f6fa" stroke="#6a7a98"/>
<path d="M866 38.5 H873" stroke="#9aa" stroke-dasharray="1 1"/>
<rect x="867" y="40.5" width="2.5" height="1.5" fill="#6aa0e0"/><rect x="870" y="42.5" width="3" height="1.5" fill="#2a68d8"/>
<rect x="870" y="44.5" width="3" height="1.5" fill="#2a68d8"/><rect x="867" y="46.5" width="3" height="1.5" fill="#3a78e0"/>
</g>
<rect x="882" y="37" width="1.2" height="13" fill="#c4c4c4"/>
<g>
<rect x="889.0" y="37.5" width="12" height="12" fill="#fafafa" stroke="#9a9a9a"/>
<rect x="888.5" y="37" width="13" height="2" fill="#858585"/>
<path d="M888.5 46 L891.5 40.5 L893.5 41 L894.0 50 L892.0 50Z" fill="#b8b8b8"/>
<path d="M888.5 45.5 L893.0 50.2" stroke="#222" stroke-width="1.4"/>
<path d="M892.5 49.5 H901.5" stroke="#111" stroke-width="1.2"/>
<path d="M890.0 41 h3 M895.5 41 h4" stroke="#666" stroke-width="0.9"/>
<text x="893.5" y="48.3" font-family="Liberation Serif" font-weight="bold" font-size="7.5" fill="#000" style="-webkit-font-smoothing:antialiased">D</text>
</g>
<g>
<rect x="909.0" y="37.5" width="12" height="12" fill="#fafafa" stroke="#9a9a9a"/>
<rect x="908.5" y="37" width="13" height="2" fill="#858585"/>
<path d="M908.5 46 L911.5 40.5 L913.5 41 L914.0 50 L912.0 50Z" fill="#b8b8b8"/>
<path d="M908.5 45.5 L913.0 50.2" stroke="#222" stroke-width="1.4"/>
<path d="M912.5 49.5 H921.5" stroke="#111" stroke-width="1.2"/>
<path d="M910.0 41 h3 M915.5 41 h4" stroke="#666" stroke-width="0.9"/>
<text x="913.5" y="48.3" font-family="Liberation Serif" font-weight="bold" font-size="7.5" fill="#000" style="-webkit-font-smoothing:antialiased">L</text>
</g>
<g>
<rect x="929.5" y="37.5" width="12" height="12" fill="#fafafa" stroke="#9a9a9a"/>
<rect x="929" y="37" width="13" height="2" fill="#858585"/>
<path d="M929 46 L932 40.5 L934 41 L934.5 50 L932.5 50Z" fill="#b8b8b8"/>
<path d="M929 45.5 L933.5 50.2" stroke="#222" stroke-width="1.4"/>
<path d="M933 49.5 H942" stroke="#111" stroke-width="1.2"/>
<path d="M930.5 41 h3 M936 41 h4" stroke="#666" stroke-width="0.9"/>
<text x="934" y="48.3" font-family="Liberation Serif" font-weight="bold" font-size="7.5" fill="#000" style="-webkit-font-smoothing:antialiased">R</text>
</g>
</svg>
</body></html>
